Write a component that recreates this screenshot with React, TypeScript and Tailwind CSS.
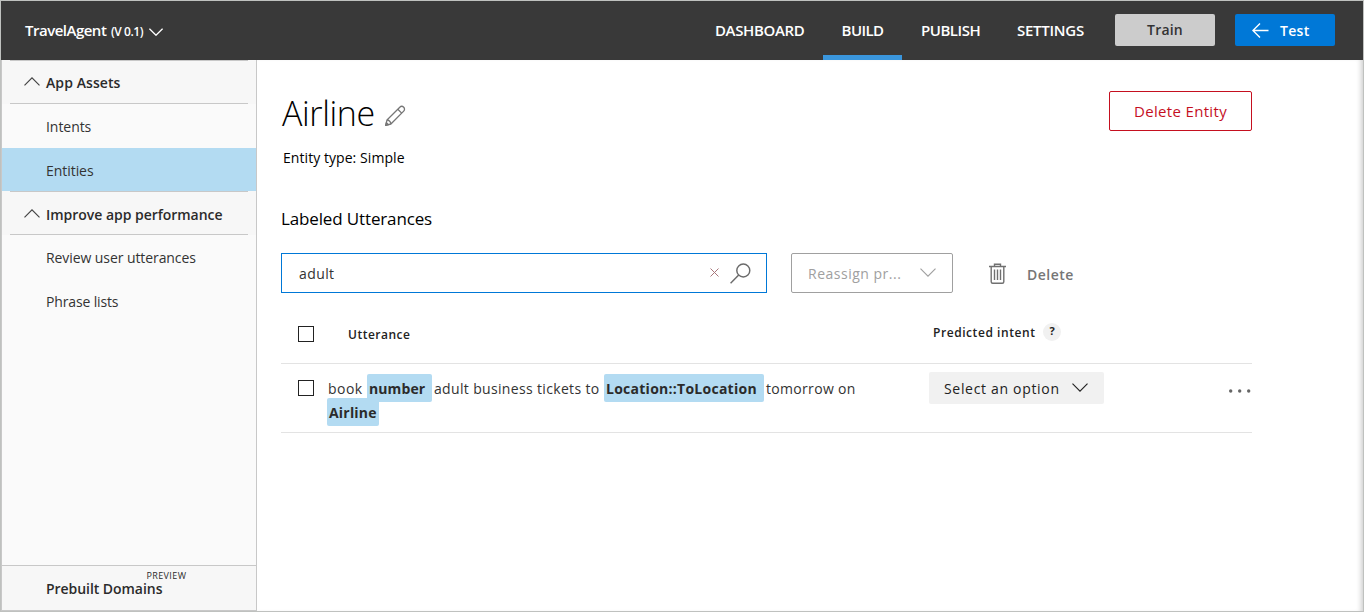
import type { ReactNode } from "react";

function Chevron({ className, up = false }: { className: string; up?: boolean }) {
  return (
    <svg viewBox="0 0 16 9" className={className} fill="none" stroke="currentColor" strokeWidth="1.15">
      <path d={up ? "M.5 8.3 8 .8l7.5 7.5" : "M.5.7 8 8.2 15.5.7"} />
    </svg>
  );
}

function PencilIcon() {
  return (
    <svg viewBox="0 0 22 22" className="h-[22px] w-[22px] text-[#767676]" fill="none" stroke="currentColor" strokeWidth="1.3" strokeLinejoin="round">
      <path d="M1.7 20.4 3 15 15.8 2.2a2.6 2.6 0 0 1 3.9 3.9L6.9 19z" />
      <path d="M13.8 4.2 17.7 8.1M3 15c2 0 3.9 1.9 3.9 4M1.7 20.4l.7-2.7 2 2z" />
    </svg>
  );
}

function SearchIcon() {
  return (
    <svg viewBox="0 0 21 21" className="h-[21px] w-[21px] text-[#6b6b6b]" fill="none" stroke="currentColor" strokeWidth="1.45">
      <circle cx="13.3" cy="7.5" r="6.5" />
      <path d="M8.7 12.1.6 20.2" />
    </svg>
  );
}

function TrashIcon() {
  return (
    <svg viewBox="0 0 17 21" className="h-[21px] w-[17px] text-[#707070]" fill="none" stroke="currentColor" strokeWidth="1.4">
      <path d="M0 3.5h17M5.5 3.5V1.2h6v2.3M2.2 3.5v15.200q0 1.500 1.500 1.500h9.600q1.500 0 1.500-1.500V3.500" />
      <path d="M5.500 6.500v10.500M8.500 6.500v10.500M11.500 6.500v10.500" />
    </svg>
  );
}

function SectionHeader({ children, className }: { children: ReactNode; className: string }) {
  return (
    <div className="bg-[#f7f7f7] px-2">
      <div className={`flex items-center border-y border-[#c8c8c8] pl-[14px] text-sm font-semibold text-[#2b2b2b] ${className}`}>
        <Chevron up className="mr-1.5 -mt-[4px] h-[9px] w-4 text-[#444]" />
        {children}
      </div>
    </div>
  );
}

function SideItem({ children, className = "" }: { children: ReactNode; className?: string }) {
  return <a className={`flex items-center pl-11 text-sm text-[#333] ${className}`}>{children}</a>;
}

function Tag({ children, className }: { children: ReactNode; className: string }) {
  return (
    <span className={`flex h-7 items-center rounded-[2px] bg-[#b3dbf2] pt-0.5 pl-0.5 font-bold text-[#2b2b2b] ${className}`}>
      {children}
    </span>
  );
}

function Checkbox() {
  return <span className="block h-4 w-4 shrink-0 border border-[#222] bg-white" />;
}

export default function App() {
  return (
    <div className="flex h-[612px] w-[1364px] flex-col overflow-hidden border border-[#bfc1bf] bg-white font-['Open_Sans','Noto_Sans',sans-serif] whitespace-nowrap">
      <header className="flex h-[59px] shrink-0 bg-[#393939] text-[15px] font-semibold text-white">
        <div className="flex h-[59px] items-center pl-6">
          <span className="w-[86px] text-[15px] tracking-[-0.5px]">TravelAgent</span>
          <span className="w-[38px] pt-0.5 text-xs tracking-[-0.45px]">(V 0.1)</span>
          <Chevron className="mt-[3px] h-[8px] w-[14px] stroke-[1.5]" />
        </div>
        <nav className="ml-auto flex h-[59px] items-center">
          <a className="w-[127px] tracking-[-0.37px]">DASHBOARD</a>
          <a className="-ml-[19px] flex h-full w-[79px] items-center justify-center border-b-[5px] border-[#3a96dd] pt-[5px] tracking-[-0.6px]">BUILD</a>
          <a className="ml-[19px] w-[96px] tracking-[-0.46px]">PUBLISH</a>
          <a className="w-[98px] tracking-[-0.26px]">SETTINGS</a>
        </nav>
        <div className="flex gap-5 pt-[13px] pr-7">
          <button className="h-8 w-[100px] rounded-[2px] bg-[#ccc] text-sm font-semibold tracking-[0.2px] text-[#333]">Train</button>
          <button className="flex h-8 w-[100px] items-center rounded-[2px] bg-[#0078d7] pt-px pl-[17px] text-sm font-semibold tracking-[0.3px]">
            <svg viewBox="0 0 17 15" className="mr-[11px] h-[15px] w-[17px]" fill="none" stroke="currentColor" strokeWidth="1.4">
              <path d="M8 .5.9 7.5 8 14.500M.9 7.500H16.500" />
            </svg>
            Test
          </button>
        </div>
      </header>

      <div className="flex min-h-0 flex-1">
        <aside className="flex w-[256px] shrink-0 flex-col border-r border-l border-[#c8c8c8] bg-[#fafafa]">
          <SectionHeader className="h-11 pt-0.5 tracking-[0.08px]">App Assets</SectionHeader>
          <SideItem className="h-11 pt-0.5 tracking-[-0.05px]">Intents</SideItem>
          <SideItem className="h-[43px] bg-[#b3dbf2] pt-0.5 tracking-[-0.05px]">Entities</SideItem>
          <SectionHeader className="h-11 pt-1 tracking-[-0.03px]">Improve app performance</SectionHeader>
          <SideItem className="h-11 pt-0.5 tracking-[-0.08px]">Review user utterances</SideItem>
          <SideItem className="h-11 pt-0.5 tracking-[-0.15px]">Phrase lists</SideItem>
          <div className="mt-auto flex h-[46px] items-center border-y border-[#c8c8c8] bg-[#f7f7f7] pt-0.5 pl-11 text-sm font-semibold text-[#2b2b2b]">
            <span className="tracking-[-0.05px]">Prebuilt Domains</span>
            <sup className="top-0 -ml-4 self-start pt-[2px] text-[9px] leading-[12px] font-medium tracking-[0.4px]">PREVIEW</sup>
          </div>
        </aside>

        <main className="flex min-w-0 flex-1 flex-col shadow-[inset_-5px_0_5px_-3px_#cfcfcf]">
          <div className="flex w-[995px] flex-col pl-6">
            <div className="flex h-[126px] items-start justify-between pt-[31px]">
              <div>
                <h1 className="flex h-11 items-center text-[34px] leading-[44px] font-light text-black">
                  <span className="w-[103px] pl-px tracking-[-0.4px]">Airline</span>
                  <span className="mt-[5px]"><PencilIcon /></span>
                </h1>
                <p className="mt-[13px] ml-0.5 text-sm leading-5 tracking-[0.06px] text-black">Entity type: Simple</p>
              </div>
              <button className="h-10 w-[143px] rounded-[2px] border border-[#c50f1f] text-[15px] font-medium tracking-[0.33px] text-[#c50f1f]">Delete Entity</button>
            </div>
            <h2 className="mt-[21px] text-[17px] leading-6 tracking-[-0.14px] text-black">Labeled Utterances</h2>

            <div className="mt-[22px] flex h-10 items-center text-sm">
              <div className="flex h-10 w-[486px] items-center border border-[#0078d7] pr-[15px] pl-[17px] text-[#333]">
                <span className="flex-1 pt-0.5 tracking-[0.4px]">adult</span>
                <svg viewBox="0 0 9 9" className="-mt-0.5 mr-[11px] h-[9px] w-[9px] text-[#a8767a]" stroke="currentColor" strokeWidth="1">
                  <path d="M.5.5l8 8M8.5.5l-8 8" />
                </svg>
                <SearchIcon />
              </div>
              <div className="ml-6 flex h-10 w-[162px] items-center justify-between rounded-[2px] border border-[#a0a0a0] pr-4 pl-4 text-[#a0a0a0]">
                <span className="pt-0.5 tracking-[0.5px]">Reassign pr...</span>
                <Chevron className="-mt-0.5 h-[9px] w-4" />
              </div>
              <div className="ml-9 flex items-center text-[#767676]">
                <TrashIcon />
                <span className="ml-[21px] pt-[3px] font-semibold tracking-[0.5px]">Delete</span>
              </div>
            </div>

            <div className="flex h-[71px] items-center border-b border-[#e3e3e3] pt-3 pl-[17px] text-xs font-semibold text-[#222]">
              <Checkbox />
              <span className="ml-[34px] w-[585px] pt-0.5 tracking-[0.5px]">Utterance</span>
              <span className="-mt-0.5 w-[110px] tracking-[0.56px]">Predicted intent</span>
              <span className="-mt-[5px] flex h-[18px] w-[18px] items-center justify-center rounded-full bg-[#f1f1f1] text-[11px] font-bold">?</span>
            </div>

            <div className="flex h-[69px] border-b border-[#e3e3e3] pl-[17px] text-sm text-[#333]">
              <span className="mt-4"><Checkbox /></span>
              <div className="ml-[13px] flex w-[602px] flex-col pt-[10px]">
                <div className="flex h-6 items-start leading-[30px]">
                  <span className="w-10 pl-px tracking-[0.45px]">book</span>
                  <Tag className="w-[65px] tracking-[0.1px]">number</Tag>
                  <span className="ml-0.5 w-[170px] tracking-[0.34px]">adult business tickets to</span>
                  <Tag className="w-[160px] tracking-[0.26px]">Location::ToLocation</Tag>
                  <span className="ml-0.5 tracking-[0.32px]">tomorrow on</span>
                </div>
                <Tag className="w-[52px] tracking-[0.2px]">Airline</Tag>
              </div>
              <button className="mt-2 flex h-8 w-[175px] items-center rounded-[2px] bg-[#f1f1f1] pl-[15px] text-[#222]">
                <span className="w-32 pt-0.5 text-left tracking-[0.68px]">Select an option</span>
                <Chevron className="-mt-0.5 h-[9px] w-4" />
              </button>
              <svg viewBox="0 0 22 4" className="mt-[25px] mr-px ml-auto h-1 w-[22px] text-[#666]" fill="currentColor">
                <circle cx="1.7" cy="2" r="1.7" />
                <circle cx="10.7" cy="2" r="1.7" />
                <circle cx="19.7" cy="2" r="1.7" />
              </svg>
            </div>
          </div>
        </main>
      </div>
    </div>
  );
}
